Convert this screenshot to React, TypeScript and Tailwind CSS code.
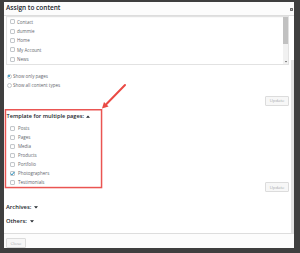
import React from "react";

function Box({ checked = false }: { checked?: boolean }) {
  return (
    <span className="w-[5px] h-[5px] shrink-0 border border-[#c3c7cb] bg-white rounded-[1px] shadow-[inset_0_0.5px_1px_rgba(0,0,0,0.06)] flex items-center justify-center">
      {checked && (
        <svg width="5" height="5" viewBox="0 0 10 10" className="overflow-visible">
          <path d="M1.5 5.2 L4 7.8 L8.8 1.8" fill="none" stroke="#1e8cbe" strokeWidth="2" />
        </svg>
      )}
    </span>
  );
}

function Radio({ on = false }: { on?: boolean }) {
  return (
    <span className="w-[5px] h-[5px] shrink-0 border border-[#c3c7cb] bg-white rounded-full flex items-center justify-center">
      {on && <span className="w-[2px] h-[2px] rounded-full bg-[#1e8cbe]" />}
    </span>
  );
}

function Btn({ label, w }: { label: string; w: string }) {
  return (
    <div
      className={`${w} h-[10px] border border-[#dcdcdc] bg-[#f7f7f7] rounded-[1px] flex items-center justify-center text-[4.3px] text-[#a7aaad] leading-none`}
    >
      {label}
    </div>
  );
}

function TriDown() {
  return (
    <svg width="4" height="3" viewBox="0 0 4 3" className="shrink-0">
      <path d="M0 0.3 L4 0.3 L2 2.6 Z" fill="#23282d" />
    </svg>
  );
}

function TriUp() {
  return (
    <svg width="4" height="3" viewBox="0 0 4 3" className="shrink-0">
      <path d="M0 2.7 L4 2.7 L2 0.4 Z" fill="#23282d" />
    </svg>
  );
}

export default function App() {
  const pages = ["Contact", "dummie", "Home", "My Account", "News"];
  const types = ["Posts", "Pages", "Media", "Products", "Portfolio", "Photographers", "Testimonials"];
  return (
    <div className="w-[300px] h-[253px] bg-[#3f3f3f] pt-[2px] pl-[4px] overflow-hidden relative font-['Open_Sans',sans-serif]">
      <div className="w-[290px] h-[246px] bg-white flex flex-col">
        {/* header */}
        <div className="h-[14px] shrink-0 bg-[#fcfcfc] border-b border-[#dddddd] flex items-center justify-between pl-[2px] pr-[1px]">
          <span className="text-[6.5px] font-semibold text-[#23282d] leading-none">Assign to content</span>
          <svg width="3" height="3" viewBox="0 0 6 6" className="mt-[1px]">
            <rect x="0" y="0" width="6" height="6" fill="#6a6a6a" />
            <path d="M1.5 1.5 L4.5 4.5 M4.5 1.5 L1.5 4.5" stroke="#dcdcdc" strokeWidth="1" />
          </svg>
        </div>
        {/* body */}
        <div className="flex-1 min-h-0 flex overflow-hidden">
          <div className="flex-1 flex flex-col pl-[2px] pr-[2px] text-[#5f666d]">
            {/* list box */}
            <div className="h-[49px] shrink-0 border border-[#e2e2e2] flex shadow-[inset_0_0.5px_1px_rgba(0,0,0,0.05)]">
              <div className="flex-1 flex flex-col pl-[3px] pt-[0.25px]">
                {pages.map((p) => (
                  <div key={p} className="h-[9.5px] flex items-center gap-[2px]">
                    <Box />
                    <span className="text-[4.5px] leading-none">{p}</span>
                  </div>
                ))}
              </div>
              <div className="w-[5px] flex flex-col bg-[#f1f1f1]">
                <div className="h-[27px] bg-[#c1c1c1]" />
                <div className="flex-1 flex items-end justify-center pb-[1.5px]">
                  <svg width="2" height="1.5" viewBox="0 0 4 3">
                    <path d="M0 0 L4 0 L2 3 Z" fill="#505050" />
                  </svg>
                </div>
              </div>
            </div>
            {/* radios */}
            <div className="mt-[6.5px] flex flex-col pl-[0.5px]">
              <div className="h-[9px] flex items-center gap-[1.5px]">
                <Radio on />
                <span className="text-[4.5px] leading-none">Show only pages</span>
              </div>
              <div className="h-[9px] flex items-center gap-[1.5px]">
                <Radio />
                <span className="text-[4.5px] leading-none">Show all content types</span>
              </div>
            </div>
            <div className="mt-[6px] self-end">
              <Btn label="Update" w="w-[24px]" />
            </div>
            {/* template section */}
            <div className="mt-[6.3px] flex justify-between">
              <div className="flex flex-col">
                <div className="h-[9px] flex items-center gap-[2.5px] pl-[0.5px]">
                  <span className="text-[5.6px] font-semibold text-[#23282d] leading-none">
                    Template for multiple pages:
                  </span>
                  <TriUp />
                </div>
                <div className="mt-[3.45px] flex flex-col pl-[4px]">
                  {types.map((t) => (
                    <div key={t} className="h-[8.9px] flex items-center gap-[3px]">
                      <Box checked={t === "Photographers"} />
                      <span className="text-[4.5px] leading-none">{t}</span>
                    </div>
                  ))}
                </div>
              </div>
              <div className="mt-[70.7px]">
                <Btn label="Update" w="w-[24px]" />
              </div>
            </div>
            <div className="mt-[11px] h-[9px] flex items-center gap-[3px]">
              <span className="text-[5.8px] font-semibold text-[#23282d] leading-none">Archives:</span>
              <TriDown />
            </div>
            <div className="mt-[4.7px] h-[9px] flex items-center gap-[3px]">
              <span className="text-[5.8px] font-semibold text-[#23282d] leading-none">Others:</span>
              <TriDown />
            </div>
          </div>
          <div className="w-[3px] pt-[44px] flex flex-col">
            <div className="flex-1 bg-[#e2e2e2]" />
          </div>
        </div>
        {/* footer */}
        <div className="h-[15px] shrink-0 border-t border-[#dddddd] bg-[#fcfcfc] pl-[2px] pt-[4px]">
          <Btn label="Close" w="w-[20px]" />
        </div>
      </div>

      {/* annotation overlay */}
      <svg className="absolute left-0 top-0 pointer-events-none" width="300" height="253" viewBox="0 0 300 253">
        <rect x="5.45" y="109.75" width="96.1" height="77.8" fill="none" stroke="#ea5552" strokeWidth="1.5" />
        <line x1="125" y1="85" x2="106.5" y2="104" stroke="#ea4a44" strokeWidth="2" strokeLinecap="round" />
        <polygon points="102,108.5 108.6,106.6 104,102" fill="#ea4a44" />
      </svg>
    </div>
  );
}
